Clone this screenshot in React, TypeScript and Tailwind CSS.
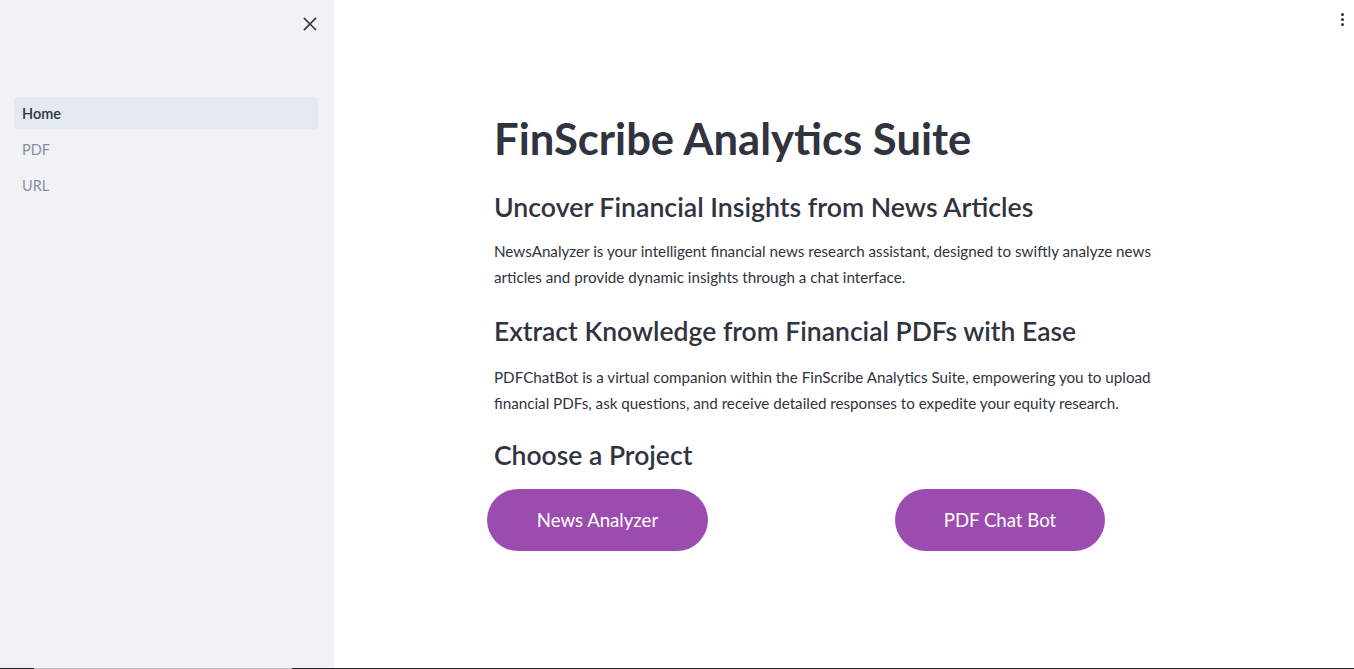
import React from "react";

const font = { fontFamily: '"Lato", "Liberation Sans", sans-serif' };

export default function App() {
  return (
    <div className="relative flex h-[669px] w-[1354px] overflow-hidden bg-white text-[#31333f]" style={font}>
      <aside className="flex h-full w-[334px] shrink-0 flex-col bg-[#f0f2f6]">
        <div className="flex h-[46px] items-center justify-end pr-[17px] pt-[1px]">
          <svg width="14" height="14" viewBox="0 0 14 14" fill="none" stroke="#31333f" strokeWidth="1.6" strokeLinecap="square">
            <path d="M1.5 1.5 L12.5 12.5 M12.5 1.5 L1.5 12.5" />
          </svg>
        </div>
        <nav className="mt-[51px] flex flex-col gap-[4px] pl-[14px] pr-[16px]">
          <div className="flex h-[32px] items-center rounded-[4px] bg-[#e4e8ef] px-[8px] pt-[2px] text-[14.5px] font-semibold text-[#31333f]">Home</div>
          <div className="flex h-[32px] items-center px-[8px] pt-[2px] text-[14.5px] text-[#8a90a2]">PDF</div>
          <div className="flex h-[32px] items-center px-[8px] pt-[2px] text-[14.5px] text-[#8a90a2]">URL</div>
        </nav>
      </aside>
      <main className="relative flex-1">
        <div className="absolute right-[10px] top-[13px] flex flex-col gap-[2px]">
          <span className="h-[3px] w-[3px] rounded-full bg-[#31333f]" />
          <span className="h-[3px] w-[3px] rounded-full bg-[#31333f]" />
          <span className="h-[3px] w-[3px] rounded-full bg-[#31333f]" />
        </div>
        <div className="ml-[160px] w-[704px] pt-[112px]">
          <h1 className="text-[43.6px] font-bold leading-[52px]">FinScribe Analytics Suite</h1>
          <h3 className="mt-[25px] text-[26.7px] font-semibold leading-[36px]">Uncover Financial Insights from News Articles</h3>
          <p className="mt-[13px] text-[15.2px] leading-[26px]">
            NewsAnalyzer is your intelligent financial news research assistant, designed to swiftly analyze news articles and provide dynamic insights through a chat interface.
          </p>
          <h3 className="mt-[23px] text-[26.5px] font-semibold leading-[36px]">Extract Knowledge from Financial PDFs with Ease</h3>
          <p className="mt-[15px] text-[15.2px] leading-[26px]">
            PDFChatBot is a virtual companion within the FinScribe Analytics Suite, empowering you to upload financial PDFs, ask questions, and receive detailed responses to expedite your equity research.
          </p>
          <h3 className="mt-[21px] text-[26.5px] font-semibold leading-[36px]">Choose a Project</h3>
          <div className="mt-[16px] flex gap-[16px]">
            <div className="w-[344px]">
              <button className="-ml-[7px] h-[62px] w-[221px] rounded-full bg-[#9c4caf] pt-[1px] text-[18.6px] text-white">News Analyzer</button>
            </div>
            <div className="w-[344px]">
              <button className="ml-[41px] h-[62px] w-[210px] rounded-full bg-[#9c4caf] pt-[1px] text-[18.6px] text-white">PDF Chat Bot</button>
            </div>
          </div>
        </div>
      </main>
      <div className="absolute bottom-0 left-0 flex h-[1px] w-full">
        <div className="w-[34px] bg-[#222]" />
        <div className="w-[258px] bg-[#bdbdbd]" />
        <div className="flex-1 bg-[#2a2420]" />
      </div>
    </div>
  );
}
